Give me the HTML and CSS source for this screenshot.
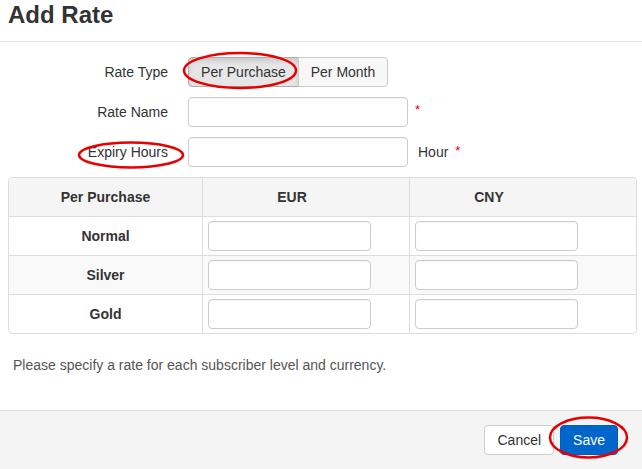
FILE: index.html
```html
<!DOCTYPE html>
<html>
<head>
<meta charset="utf-8">
<link rel="stylesheet" href="styles.css">
</head>
<body>
<div class="dialog">
  <header class="dlg-header"><h1>Add Rate</h1></header>
  <div class="dlg-body">
    <div class="form-row">
      <label class="lbl">Rate Type</label>
      <div class="btn-group">
        <button class="seg seg-purchase active">Per Purchase</button>
        <button class="seg seg-month">Per Month</button>
      </div>
    </div>
    <div class="form-row">
      <label class="lbl">Rate Name</label>
      <input class="field" type="text">
      <span class="req">*</span>
    </div>
    <div class="form-row">
      <label class="lbl">Expiry Hours</label>
      <input class="field" type="text">
      <span class="unit">Hour</span>
      <span class="req req-unit">*</span>
    </div>

    <table class="rates">
      <thead>
        <tr><th class="c1">Per Purchase</th><th class="c2">EUR</th><th class="c3">CNY</th></tr>
      </thead>
      <tbody>
        <tr><th>Normal</th><td><input class="cell-in" type="text"></td><td><input class="cell-in" type="text"></td></tr>
        <tr class="alt"><th>Silver</th><td><input class="cell-in" type="text"></td><td><input class="cell-in" type="text"></td></tr>
        <tr><th>Gold</th><td><input class="cell-in" type="text"></td><td><input class="cell-in" type="text"></td></tr>
      </tbody>
    </table>

    <p class="help">Please specify a rate for each subscriber level and currency.</p>
  </div>
  <footer class="dlg-footer">
    <button class="btn btn-default">Cancel</button>
    <button class="btn btn-primary">Save</button>
  </footer>

  <svg class="marks" width="642" height="469" viewBox="0 0 642 469">
    <ellipse cx="240" cy="70.5" rx="56" ry="17.5" />
    <ellipse cx="131" cy="155" rx="52" ry="12.5" />
    <ellipse cx="588.5" cy="437.5" rx="38.5" ry="20" />
  </svg>
</div>
</body>
</html>
```

FILE: styles.css
```css
* { box-sizing: border-box; }
html, body { margin: 0; padding: 0; background: #fff; }
body {
  font-family: "Liberation Sans", Arial, sans-serif;
  font-size: 14px;
  color: #333;
  width: 642px;
  height: 469px;
  overflow: hidden;
}
.dialog {
  position: relative;
  width: 642px;
  height: 469px;
  display: flex;
  flex-direction: column;
}
.dlg-header {
  height: 42px;
  padding: 1px 8px 0;
  border-bottom: 1px solid #e5e5e5;
}
.dlg-header h1 {
  margin: 0;
  font-size: 24px;
  line-height: 28px;
  font-weight: bold;
  color: #333;
}
.dlg-body {
  flex: 1;
  padding-top: 15px;
}
.form-row {
  display: flex;
  align-items: center;
  height: 30px;
  margin-bottom: 10px;
}
.lbl {
  width: 168px;
  text-align: right;
  margin-right: 20px;
  color: #333;
}
.btn-group { display: flex; height: 30px; }
.seg {
  font-family: inherit;
  font-size: 14px;
  color: #333;
  height: 30px;
  padding: 0;
  border: 1px solid #ccc;
  background: #f7f7f7;
  cursor: pointer;
}
.seg-purchase {
  width: 111px;
  border-radius: 4px 0 0 4px;
}
.seg-purchase.active {
  background: #e6e6e6;
  border-color: #adadad;
  box-shadow: inset 0 3px 5px rgba(0,0,0,0.125);
}
.seg-month {
  width: 90px;
  margin-left: -1px;
  border-radius: 0 4px 4px 0;
}
.field {
  width: 220px;
  height: 30px;
  border: 1px solid #ccc;
  border-radius: 4px;
  font-family: inherit;
  font-size: 14px;
  padding: 4px 8px;
  box-shadow: inset 0 1px 1px rgba(0,0,0,0.04);
}
.req {
  color: #e00;
  margin-left: 7px;
  align-self: flex-start;
  margin-top: 5px;
  font-size: 13px;
}
.unit { margin-left: 10px; color: #333; }
.req-unit { margin-left: 7px; margin-top: 6px; }

.rates {
  margin: 0 0 0 8px;
  width: 629px;
  border-collapse: separate;
  border-spacing: 0;
  border: 1px solid #ddd;
  border-radius: 4px;
  table-layout: fixed;
}
.rates th, .rates td {
  border-left: 1px solid #ddd;
  border-top: 1px solid #ddd;
  height: 39px;
  padding: 4px 5px;
  text-align: center;
  vertical-align: middle;
  font-size: 14px;
}
.rates thead th {
  border-top: 0;
  height: 38px;
  background: #f5f5f5;
  font-weight: bold;
  color: #333;
}
.rates thead th:first-child { border-top-left-radius: 4px; }
.rates thead th:last-child { border-top-right-radius: 4px; }
.rates tr > :first-child { border-left: 0; }
.rates .c1 { width: 193px; }
.rates .c2 { width: 207px; padding-right: 33px; }
.rates .c3 { padding-right: 73px; }
.rates tbody th { font-weight: bold; color: #333; }
.rates tbody td { text-align: left; }
.rates tr.alt th, .rates tr.alt td { background: #f9f9f9; }
.cell-in {
  display: block;
  width: 163px;
  height: 30px;
  border: 1px solid #ccc;
  border-radius: 4px;
  background: #fff;
  box-shadow: inset 0 1px 1px rgba(0,0,0,0.04);
}

.help {
  margin: 21px 0 0 13px;
  line-height: 20px;
  color: #555;
}
.dlg-footer {
  height: 59px;
  border-top: 1px solid #ddd;
  background: #f4f4f4;
  display: flex;
  justify-content: flex-end;
  align-items: flex-start;
  gap: 6px;
  padding: 14px 24px 0 0;
}
.btn {
  font-family: inherit;
  font-size: 14px;
  height: 30px;
  padding: 0 12px;
  border-radius: 4px;
  border: 1px solid #ccc;
  cursor: pointer;
}
.btn-default { background: #fff; color: #333; }
.btn-primary { background: #0066cc; border-color: #005cbf; color: #fff; }

.marks {
  position: absolute;
  left: 0;
  top: 0;
  pointer-events: none;
}
.marks ellipse {
  fill: none;
  stroke: #e80000;
  stroke-width: 2.5;
}
```
